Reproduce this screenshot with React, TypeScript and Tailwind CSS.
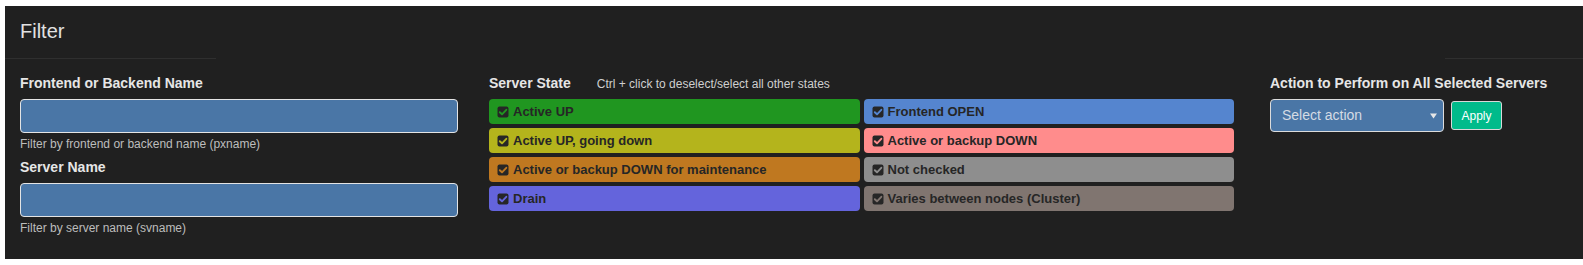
import React from "react";

interface StateItem {
  label: string;
  bg: string;
}

const STATES: StateItem[] = [
  { label: "Active UP", bg: "#209620" },
  { label: "Frontend OPEN", bg: "#5585cf" },
  { label: "Active UP, going down", bg: "#b4b41c" },
  { label: "Active or backup DOWN", bg: "#ff8c8c" },
  { label: "Active or backup DOWN for maintenance", bg: "#bf7820" },
  { label: "Not checked", bg: "#8e8e8e" },
  { label: "Drain", bg: "#6464dc" },
  { label: "Varies between nodes (Cluster)", bg: "#807570" },
];

const CheckSquare: React.FC<{ color: string }> = ({ color }) => (
  <svg width="12" height="12" viewBox="0 0 12 12" className="shrink-0">
    <rect x="0.5" y="0.5" width="11" height="11" rx="2" fill="#262626" />
    <path d="M2.8 6.2 L5 8.3 L9.3 3.8" fill="none" stroke={color} strokeWidth="1.9" strokeLinecap="round" strokeLinejoin="round" />
  </svg>
);

const StateButton: React.FC<{ item: StateItem }> = ({ item }) => (
  <div
    className="h-[25px] rounded-[4px] flex items-center gap-[4px] pl-[8px] text-[13px] font-bold text-[#262626]"
    style={{ backgroundColor: item.bg }}
  >
    <CheckSquare color={item.bg} />
    <span className="leading-[25px]">{item.label}</span>
  </div>
);

const Field: React.FC<{ label: string; help: string; first?: boolean }> = ({ label, help, first }) => (
  <div className={first ? "" : "mt-[5px]"}>
    <div className="text-[14px] leading-[20px] font-bold text-[#e6e6e6]">{label}</div>
    <input
      type="text"
      className="mt-[6px] block w-[438px] h-[34px] rounded-[4px] border border-[#e4e4e4] bg-[#4a76a6] outline-none"
    />
    <div className="mt-[4px] text-[12px] leading-[15px] text-[#bdbdbd]">{help}</div>
  </div>
);

export default function App() {
  return (
    <div className="bg-white pt-[6px] pl-[5px] pb-[6px] font-['Liberation_Sans',Arial,sans-serif]">
      <div className="bg-[#202020] h-[253px]">
        <div className="h-[52px] pt-[11px] px-[15px] text-[20px] leading-[28px] text-[#e2e2e2]">Filter</div>
        <div className="flex h-px">
          <div className="w-[211px] bg-[#2f2f2f]" />
          <div className="flex-1" />
          <div className="w-[138px] bg-[#2f2f2f]" />
        </div>
        <div className="flex pt-[14px]">
          <div className="w-[469px] px-[15px]">
            <Field label="Frontend or Backend Name" help="Filter by frontend or backend name (pxname)" first />
            <Field label="Server Name" help="Filter by server name (svname)" />
          </div>
          <div className="w-[781px] px-[15px]">
            <div className="flex items-baseline h-[20px] leading-[20px]">
              <span className="text-[14px] font-bold text-[#e6e6e6]">Server State</span>
              <span className="ml-[26px] text-[12px] text-[#cfcfcf]">Ctrl + click to deselect/select all other states</span>
            </div>
            <div className="mt-[6px] w-[745px] grid grid-cols-2 gap-x-[4px] gap-y-[4px]">
              {STATES.map((s) => (
                <StateButton key={s.label} item={s} />
              ))}
            </div>
          </div>
          <div className="flex-1 px-[15px]">
            <div className="text-[14px] leading-[20px] font-bold text-[#e6e6e6]">Action to Perform on All Selected Servers</div>
            <div className="mt-[6px] flex items-center">
              <div className="w-[174px] h-[33px] rounded-[4px] border border-[#dcdcdc] bg-[#4a76a6] flex items-center justify-between pl-[11px] pr-[6px]">
                <span className="text-[14px] text-[#d4dbe4]">Select action</span>
                <svg width="7" height="6" viewBox="0 0 7 6">
                  <path d="M0 0.5 H7 L3.5 5.5 Z" fill="#e6e6e6" />
                </svg>
              </div>
              <button className="ml-[7px] w-[51px] h-[29px] rounded-[3px] border border-[#d8d8d8] bg-[#00bb8b] text-white text-[12px]">
                Apply
              </button>
            </div>
          </div>
        </div>
      </div>
    </div>
  );
}
